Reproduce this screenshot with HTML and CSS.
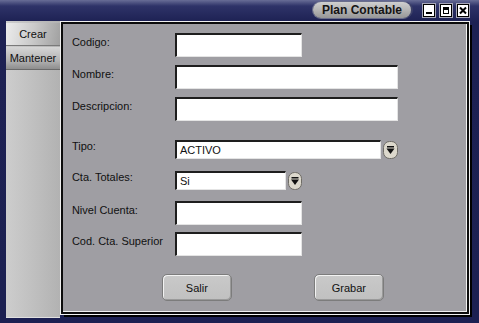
FILE: index.html
```html
<!DOCTYPE html>
<html lang="es">
<head>
    <meta charset="UTF-8">
    <title>Plan Contable</title>
    <link rel="stylesheet" href="styles.css">
</head>
<body>
    <div class="window">
        <div class="titlebar">
            <div class="title-pill">Plan Contable</div>
            <div class="win-buttons">
                <span class="win-btn">
                    <svg width="12" height="13" viewBox="0 0 12 13"><rect x="0.5" y="0.5" width="11" height="12" fill="#fff" stroke="#000"/><rect x="3" y="8" width="6" height="2" fill="#000"/></svg>
                </span>
                <span class="win-btn">
                    <svg width="12" height="13" viewBox="0 0 12 13"><rect x="0.5" y="0.5" width="11" height="12" fill="#fff" stroke="#000"/><rect x="3" y="3" width="6" height="7" fill="#000"/><rect x="4" y="6" width="4" height="3" fill="#fff"/></svg>
                </span>
                <span class="win-btn">
                    <svg width="12" height="13" viewBox="0 0 12 13"><rect x="0.5" y="0.5" width="11" height="12" fill="#fff" stroke="#000"/><path d="M3 3.5 L9 9.5 M9 3.5 L3 9.5" stroke="#000" stroke-width="2"/></svg>
                </span>
            </div>
        </div>

        <div class="content">
            <div class="sidebar">
                <div class="tab tab-active">Crear</div>
                <div class="tab">Mantener</div>
            </div>

            <div class="panel">
                <div class="row row-codigo">
                    <label class="lbl">Codigo:</label>
                    <input class="field short" type="text">
                </div>
                <div class="row row-gap8">
                    <label class="lbl">Nombre:</label>
                    <input class="field long" type="text">
                </div>
                <div class="row row-gap8">
                    <label class="lbl">Descripcion:</label>
                    <input class="field long" type="text">
                </div>
                <div class="row row-tipo">
                    <label class="lbl lbl-sel">Tipo:</label>
                    <div class="combo">
                        <div class="combo-box tipo">ACTIVO</div>
                        <span class="combo-arrow">
                            <svg width="15" height="18" viewBox="0 0 15 18"><rect x="0.5" y="0.5" width="14" height="17" rx="6" fill="#dcd8cc" stroke="#6e6c66"/><rect x="4" y="5" width="7" height="1.5" fill="#111"/><path d="M3.5 7.5 L11.5 7.5 L7.5 13 Z" fill="#111"/></svg>
                        </span>
                    </div>
                </div>
                <div class="row row-cta">
                    <label class="lbl lbl-sel">Cta. Totales:</label>
                    <div class="combo">
                        <div class="combo-box cta">Si</div>
                        <span class="combo-arrow">
                            <svg width="14" height="18" viewBox="0 0 14 18"><rect x="0.5" y="0.5" width="13" height="17" rx="6" fill="#dcd8cc" stroke="#6e6c66"/><rect x="3.5" y="5" width="7" height="1.5" fill="#111"/><path d="M3 7.5 L11 7.5 L7 13 Z" fill="#111"/></svg>
                        </span>
                    </div>
                </div>
                <div class="row row-nivel">
                    <label class="lbl">Nivel Cuenta:</label>
                    <input class="field short" type="text">
                </div>
                <div class="row row-cod">
                    <label class="lbl">Cod. Cta. Superior</label>
                    <input class="field short" type="text">
                </div>
                <div class="actions">
                    <button class="btn">Salir</button>
                    <button class="btn">Grabar</button>
                </div>
            </div>
        </div>
    </div>
</body>
</html>
```

FILE: styles.css
```css
body {
    margin: 0;
    width: 479px;
    height: 323px;
    overflow: hidden;
    font-family: "Liberation Sans", Arial, sans-serif;
    font-size: 11px;
    color: #111;
    background: #1c2052;
}

.window {
    display: flex;
    flex-direction: column;
    height: 323px;
    background: linear-gradient(180deg, #686d96 0, #2e3368 6px, #1d2153 22px, #1c2052 100%);
}

.titlebar {
    height: 22px;
    display: flex;
    align-items: center;
    justify-content: flex-end;
    padding-right: 10px;
}

.title-pill {
    height: 16px;
    line-height: 16px;
    padding: 0 9px;
    margin-top: -1px;
    border-radius: 8px;
    font-size: 12px;
    font-weight: bold;
    color: #151515;
    background: linear-gradient(180deg, #cfcfcf 0, #b4b4b4 50%, #979797 100%);
    box-shadow: 2px 0 0 #3c4068, 0 0 0 1px #6a6e8c;
    margin-right: 12px;
}

.win-buttons {
    display: flex;
    gap: 5px;
}

.win-btn {
    display: block;
    width: 12px;
    height: 13px;
    box-shadow: 0 0 0 1px #a8a8b8;
}

.win-btn svg {
    display: block;
}

.content {
    flex: 1;
    display: flex;
    padding: 1px 10px 9px 6px;
}

.sidebar {
    width: 54px;
    margin-top: -1px;
    margin-bottom: -4px;
    padding-top: 2px;
    background: linear-gradient(90deg, #cdcdcd 0, #bdbdbd 60%, #b2b2b2 100%);
    border-bottom: 1px solid #e0e0e0;
}

.tab {
    height: 22px;
    line-height: 22px;
    text-align: center;
    border-bottom: 1px solid #6a6a6a;
    background: linear-gradient(180deg, #d6d6d6 0, #b4b4b4 60%, #8e8e8e 100%);
}

.tab-active {
    background: linear-gradient(100deg, #ececec 0, #cacaca 50%, #a0a0a0 100%);
    border-bottom: 1px solid #7a7a7a;
    margin-bottom: 1px;
}

.panel {
    margin-left: 1px;
    width: 396px;
    height: 279px;
    border: 2px solid #0c0c0c;
    background: #9f9ea3;
    box-shadow: inset -1px -1px 0 #f0f0f0, 0 0 0 1px #f0f0f0, 3px 3px 0 0 #000;
    padding-top: 9px;
    padding-left: 9px;
    display: flex;
    flex-direction: column;
}

.row {
    display: flex;
    align-items: flex-start;
}

.lbl {
    width: 103px;
    line-height: 13px;
    padding-top: 3px;
}

.lbl-sel {
    padding-top: 0;
}

.row-gap8 {
    margin-top: 8px;
}

.row-tipo {
    margin-top: 19px;
}

.row-cta {
    margin-top: 12px;
}

.row-nivel {
    margin-top: 11px;
}

.row-cod {
    margin-top: 7px;
}

.field {
    height: 24px;
    box-sizing: border-box;
    margin: 0;
    padding: 0 3px;
    background: #fff;
    border-top: 2px solid #1e1e1e;
    border-left: 2px solid #1e1e1e;
    border-right: 1px solid #e4e4e4;
    border-bottom: 1px solid #e4e4e4;
    font-family: inherit;
    font-size: 11px;
    outline: none;
}

.short {
    width: 127px;
}

.long {
    width: 223px;
}

.combo {
    display: flex;
    align-items: center;
    gap: 2px;
}

.combo-box {
    height: 19px;
    box-sizing: border-box;
    padding-left: 3px;
    line-height: 17px;
    background: #fff;
    border-top: 2px solid #1e1e1e;
    border-left: 2px solid #1e1e1e;
    border-right: 1px solid #e4e4e4;
    border-bottom: 1px solid #e4e4e4;
}

.tipo {
    width: 206px;
}

.cta {
    width: 111px;
}

.combo-arrow svg {
    display: block;
}

.actions {
    display: flex;
    gap: 82px;
    margin-top: 18px;
    padding-left: 90px;
}

.btn {
    width: 70px;
    height: 27px;
    border: 1px solid #7c7c7c;
    border-radius: 5px;
    background: linear-gradient(180deg, #c9c9c9 0, #c0c0c0 100%);
    box-shadow: inset 1px 1px 0 #f2f2f2, inset -1px -1px 0 #9a9a9a;
    font-family: inherit;
    font-size: 11px;
    color: #111;
    padding: 0;
}
```
